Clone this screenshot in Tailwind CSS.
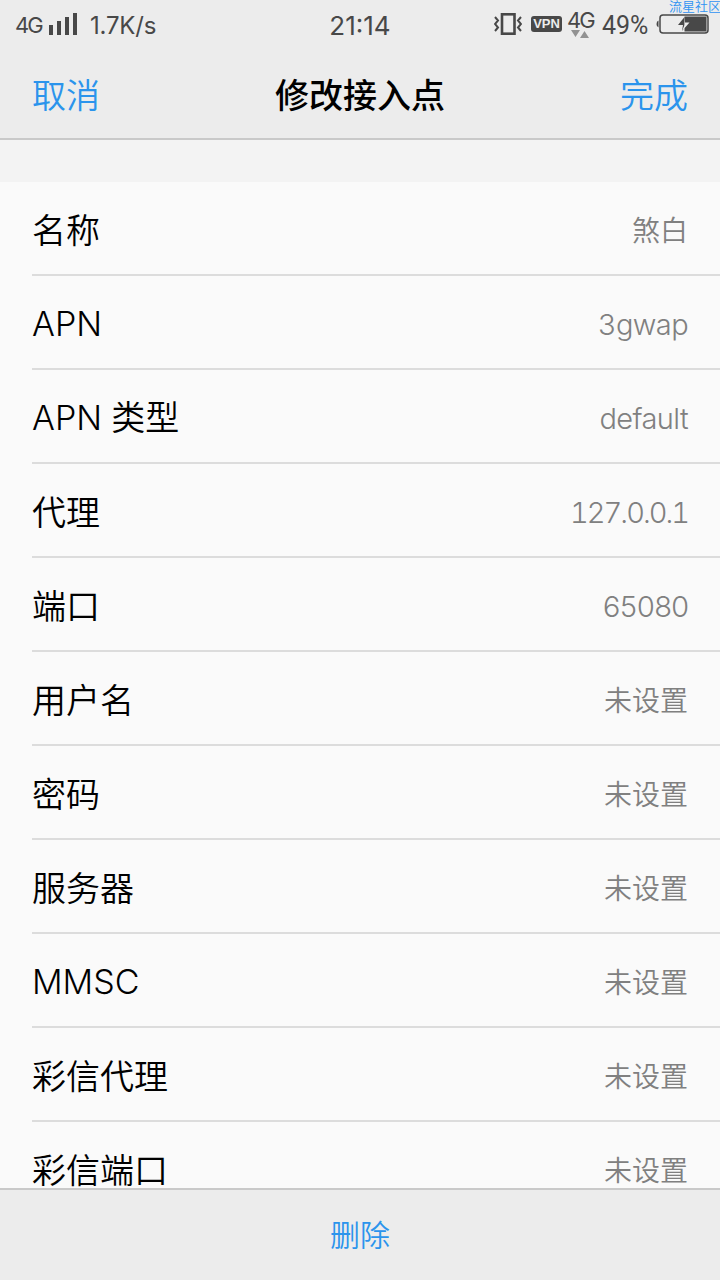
<!DOCTYPE html>
<html lang="zh-CN">
<head>
    <meta charset="UTF-8">
    <meta name="viewport" content="width=device-width, initial-scale=1.0">
    <title>修改接入点</title>
    <script src="https://cdn.jsdelivr.net/npm/@tailwindcss/browser@4"></script>
</head>
<body class="h-[1280px] w-[720px] overflow-hidden bg-[#f3f3f3] font-['Inter','Noto_Sans_CJK_SC',sans-serif] text-black">
    <div class="relative flex h-full flex-col">
        <!-- Status bar -->
        <div class="grid h-[50px] shrink-0 grid-cols-[1fr_auto_1fr] items-center bg-[#ececec] text-[#484848]">
            <div class="flex h-full items-center pl-[15px]">
                <span class="w-[34px] text-[22px] tracking-[-2px]">4G</span>
                <svg class="mb-[2px] h-[22px] w-[28px]" viewBox="0 0 28 22" fill="currentColor">
                    <rect x="0" y="12" width="4" height="10"/>
                    <rect x="8" y="8" width="4" height="14"/>
                    <rect x="16" y="4" width="4" height="18"/>
                    <rect x="24" y="0" width="4" height="22"/>
                </svg>
                <span class="ml-[13px] pt-px text-[24px] tracking-[-0.2px]">1.7K/s</span>
            </div>
            <span class="pt-px text-[26px]">21:14</span>
            <div class="flex h-full items-center justify-end pr-[11px]">
                <!-- Vibrate -->
                <svg class="mb-[2px] h-[22px] w-[28px]" viewBox="0 0 28 22" fill="none" stroke="currentColor">
                    <rect x="8" y="1.300" width="12.500" height="19.400" stroke-width="2.600"/>
                    <path d="M1 4l3 3.500-3 3.500 3 3.500-3 3.500M27 4l-3 3.500 3 3.500-3 3.500 3 3.500" stroke-width="2"/>
                </svg>
                <span class="mb-[2px] ml-[9px] flex h-4 w-[31px] items-center justify-center rounded-[3px] bg-[#484848] font-['Liberation_Sans'] text-[13px] font-bold text-[#ececec]">VPN</span>
                <div class="mb-[2px] ml-[5px] flex w-[27px] flex-col">
                    <span class="h-[19px] text-[22px] leading-[19px] tracking-[-2px]">4G</span>
                    <svg class="ml-1 h-[8px] w-[18px]" viewBox="0 0 18 8" fill="#929292">
                        <path d="M0 0h9L4.500 7zM9 8h9L13.500 1z"/>
                    </svg>
                </div>
                <span class="ml-[8px] w-[48px] pt-px font-['Roboto'] text-[25px]">49%</span>
                <svg class="mb-[2px] ml-[6px] h-[20px] w-[53px]" viewBox="0 0 53 20">
                    <path d="M2.500 6.500Q.5 7 .5 10t2 3.500z" fill="#484848"/>
                    <rect x="4" y="1" width="48" height="18" rx="3" fill="none" stroke="#484848" stroke-width="1.500"/>
                    <path d="M28.500 2.500H50.500v15H28.500z" fill="#484848"/>
                    <path d="M28.500 3L22 11h5l-1 6 2.500-3z" fill="#484848"/>
                    <path d="M28.500 3l.5 5.500h4.500L26 17l2.500-6z" fill="#ececec"/>
                </svg>
            </div>
        </div>

        <!-- Watermark -->
        <span class="absolute -top-px left-[669px] text-[13px] leading-[14px] font-[350] whitespace-nowrap text-[#2f93f2]">流星社区</span>

        <!-- Title bar -->
        <header class="grid h-[90px] shrink-0 grid-cols-3 items-center border-b-2 border-[#c9c9c9] bg-[#ececec] px-8 pt-[3px] text-[34px]">
            <button class="text-left font-[350] text-[#2b94ec]">取消</button>
            <h1 class="pb-px text-center font-medium">修改接入点</h1>
            <button class="text-right font-[350] text-[#2b94ec]">完成</button>
        </header>

        <!-- Settings -->
        <main class="mt-[42px] min-h-0 flex-1 overflow-hidden bg-[#fafafa] pl-8 font-[350] tabular-nums">
            <div class="flex h-[94px] items-center justify-between border-b-2 border-[#dcdcdc] pt-1 pr-8">
                <span class="text-[34px]">名称</span>
                <span class="pt-px text-[28px] text-[#808080]">煞白</span>
            </div>
            <div class="flex h-[94px] items-center justify-between border-b-2 border-[#dcdcdc] pt-1 pr-8">
                <span class="pb-[2px] text-[34px]">APN</span>
                <span class="pt-px text-[29px] tracking-[-0.6px] text-[#808080]">3gwap</span>
            </div>
            <div class="flex h-[94px] items-center justify-between border-b-2 border-[#dcdcdc] pt-1 pr-8">
                <span class="pb-px text-[34px]">APN 类型</span>
                <span class="pt-px text-[29px] tracking-[-0.6px] text-[#808080]">default</span>
            </div>
            <div class="flex h-[94px] items-center justify-between border-b-2 border-[#dcdcdc] pt-1 pr-8">
                <span class="text-[34px]">代理</span>
                <span class="pt-px text-[29px] tracking-[-2px] text-[#808080]">127.0.0.1</span>
            </div>
            <div class="flex h-[94px] items-center justify-between border-b-2 border-[#dcdcdc] pt-1 pr-8">
                <span class="text-[34px]">端口</span>
                <span class="pt-px text-[29px] tracking-[-1.6px] text-[#808080]">65080</span>
            </div>
            <div class="flex h-[94px] items-center justify-between border-b-2 border-[#dcdcdc] pt-1 pr-8">
                <span class="text-[34px]">用户名</span>
                <span class="pt-px text-[28px] text-[#808080]">未设置</span>
            </div>
            <div class="flex h-[94px] items-center justify-between border-b-2 border-[#dcdcdc] pt-1 pr-8">
                <span class="text-[34px]">密码</span>
                <span class="pt-px text-[28px] text-[#808080]">未设置</span>
            </div>
            <div class="flex h-[94px] items-center justify-between border-b-2 border-[#dcdcdc] pt-1 pr-8">
                <span class="text-[34px]">服务器</span>
                <span class="pt-px text-[28px] text-[#808080]">未设置</span>
            </div>
            <div class="flex h-[94px] items-center justify-between border-b-2 border-[#dcdcdc] pt-1 pr-8">
                <span class="pb-[2px] text-[34px]">MMSC</span>
                <span class="pt-px text-[28px] text-[#808080]">未设置</span>
            </div>
            <div class="flex h-[94px] items-center justify-between border-b-2 border-[#dcdcdc] pt-1 pr-8">
                <span class="text-[34px]">彩信代理</span>
                <span class="pt-px text-[28px] text-[#808080]">未设置</span>
            </div>
            <div class="flex h-[94px] items-center justify-between border-b-2 border-[#dcdcdc] pt-1 pr-8">
                <span class="text-[34px] leading-[37px]">彩信端口</span>
                <span class="pt-px text-[28px] leading-[36px] text-[#808080]">未设置</span>
            </div>
        </main>

        <!-- Bottom action -->
        <footer class="flex h-[92px] shrink-0 items-center justify-center border-t-2 border-[#c9c9c9] bg-[#ececec]">
            <button class="pt-px text-[30px] font-[350] text-[#2b94ec]">删除</button>
        </footer>
    </div>
</body>
</html>
